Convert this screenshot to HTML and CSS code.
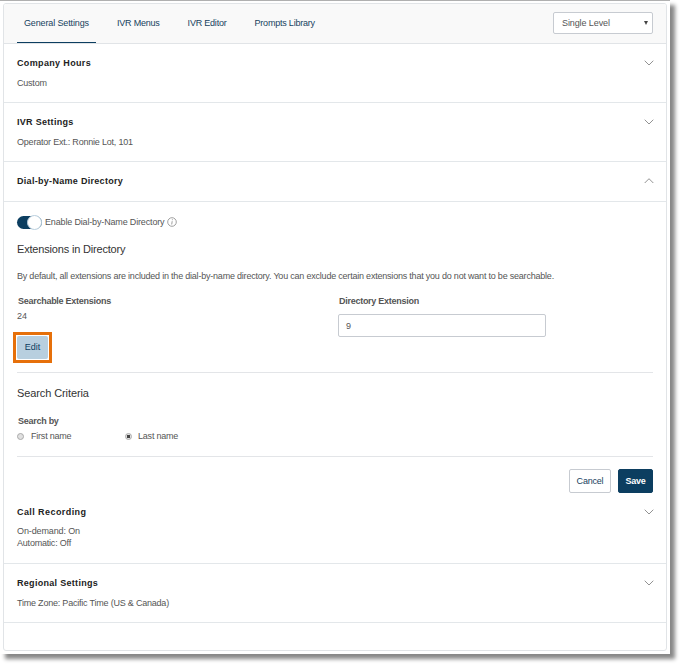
FILE: index.html
```html
<!DOCTYPE html>
<html lang="en">
<head>
<meta charset="utf-8">
<title>General Settings</title>
<link rel="stylesheet" href="styles.css">
</head>
<body>
<div class="sheet">
  <main class="panel">
    <header class="topbar">
      <nav class="tabs">
        <a class="tab active"><span class="t-general">General Settings</span></a>
        <a class="tab"><span class="t-menus">IVR Menus</span></a>
        <a class="tab"><span class="t-editor">IVR Editor</span></a>
        <a class="tab"><span class="t-prompts">Prompts Library</span></a>
      </nav>
      <div class="select"><span>Single Level</span><i class="caret"></i></div>
    </header>

    <section class="row">
      <div><h2 class="h-company">Company Hours</h2><p>Custom</p></div>
      <svg class="chev" viewBox="0 0 10 6"><path d="M.7.7 5 5 9.300.7"/></svg>
    </section>
    <section class="row">
      <div><h2 class="h-ivr">IVR Settings</h2><p class="p-operator">Operator Ext.: Ronnie Lot, 101</p></div>
      <svg class="chev" viewBox="0 0 10 6"><path d="M.7.7 5 5 9.300.7"/></svg>
    </section>
    <section class="row head">
      <div><h2 class="h-dial">Dial-by-Name Directory</h2></div>
      <svg class="chev" viewBox="0 0 10 6"><path d="M.7 5 5 .7 9.300 5"/></svg>
    </section>

    <section class="body">
      <div class="enable">
        <span class="toggle"><i class="knob"></i></span>
        <span class="t-enable">Enable Dial-by-Name Directory</span>
        <svg class="info" viewBox="0 0 10 10"><circle cx="5" cy="5" r="4.300"/><path d="M5.400 2.300v.9M5.200 4.200 4.700 7.500"/></svg>
      </div>
      <h3 class="h-ext">Extensions in Directory</h3>
      <p class="note">By default, all extensions are included in the dial-by-name directory. You can exclude certain extensions that you do not want to be searchable.</p>
      <div class="cols">
        <div class="col">
          <label class="l-search">Searchable Extensions</label>
          <p class="count">24</p>
          <div class="callout"><button class="edit">Edit</button></div>
        </div>
        <div class="col">
          <label class="l-dir">Directory Extension</label>
          <div class="field">9</div>
        </div>
      </div>
      <div class="criteria">
        <h3 class="h-crit">Search Criteria</h3>
        <label class="l-by">Search by</label>
        <div class="radios">
          <span class="radio"><i class="dot"></i><span class="t-first">First name</span></span>
          <span class="radio"><i class="dot on"></i><span class="t-last">Last name</span></span>
        </div>
      </div>
      <div class="actions">
        <button class="cancel">Cancel</button>
        <button class="save">Save</button>
      </div>
    </section>

    <section class="row recording">
      <div><h2 class="h-call">Call Recording</h2><p><span class="p-demand">On-demand: On</span><br><span class="p-auto">Automatic: Off</span></p></div>
      <svg class="chev" viewBox="0 0 10 6"><path d="M.7.7 5 5 9.300.7"/></svg>
    </section>
    <section class="row">
      <div><h2 class="h-reg">Regional Settings</h2><p class="p-zone">Time Zone: Pacific Time (US &amp; Canada)</p></div>
      <svg class="chev" viewBox="0 0 10 6"><path d="M.7.7 5 5 9.300.7"/></svg>
    </section>
  </main>
</div>
</body>
</html>
```
FILE: styles.css
```css
* { box-sizing: border-box; }
body {
  margin: 0;
  height: 666px;
  background: #fff;
  font: 9px/12px "Liberation Sans", Arial, sans-serif;
  letter-spacing: -.21px;
  color: #555;
  overflow: hidden;
}
h2, h3, p { margin: 0; white-space: nowrap; }
button, label { font: inherit; letter-spacing: inherit; }
.sheet {
  width: 670px;
  height: 654px;
  padding: 3px;
  background: #fff;
  border-top: 1px solid #b0b0b0;
  box-shadow: 5px 5px 4px #888;
}
.panel {
  width: 664px;
  height: 648px;
  margin-top: -1px;
  border: 1px solid #e1e4e7;
  border-radius: 3px;
  overflow: hidden;
}
.topbar {
  display: flex;
  justify-content: space-between;
  height: 40px;
  padding: 0 13px;
  background: #f9f9f9;
  border-bottom: 1px solid #e1e4e7;
}
.tabs { display: flex; }
.tab {
  height: 39px;
  margin-right: 14px;
  padding: 13px 7px 0;
  color: #17425e;
  white-space: nowrap;
}
.t-general { letter-spacing: -.13px; }
.tab.active { border-bottom: 1px solid #0c3e60; }
.select {
  display: flex;
  justify-content: space-between;
  width: 100px;
  height: 22px;
  margin-top: 8px;
  padding: 4px 4px 0 8px;
  background: #fff;
  border: 1px solid #c7cbd1;
  border-radius: 2px;
  letter-spacing: -.1px;
}
.caret {
  width: 4px;
  height: 4px;
  margin-top: 4px;
  background: #444;
  clip-path: polygon(0 0, 100% 0, 50% 100%);
}
.row {
  display: flex;
  justify-content: space-between;
  height: 59px;
  padding: 13px 12px 0 13px;
  border-bottom: 1px solid #e3e7ea;
}
.row h2 {
  font-size: 9px;
  line-height: 12px;
  font-weight: bold;
  color: #222;
  letter-spacing: .3px;
}
.row .h-company { letter-spacing: .35px; }
.row .h-call { letter-spacing: .42px; }
.row p { margin-top: 8px; }
.p-demand { letter-spacing: -.12px; }
.chev {
  width: 10px;
  height: 6px;
  margin-top: 3px;
  fill: none;
  stroke: #929292;
  stroke-width: 1;
}
.row.head { height: 40px; }
.body { padding: 13px 13px 0; height: 291px; }
.enable { display: flex; align-items: center; height: 14px; white-space: nowrap; }
.t-enable { letter-spacing: -.16px; }
.toggle {
  display: flex;
  justify-content: flex-end;
  align-items: center;
  width: 25px;
  height: 13px;
  margin-right: 3px;
  background: #0c3e60;
  border-radius: 7px;
}
.knob {
  flex: none;
  width: 15px;
  height: 15px;
  background: #fff;
  border: 1px solid #b9cfde;
  border-radius: 50%;
}
.info { width: 10px; height: 10px; margin-left: 3px; fill: none; stroke: #888; stroke-width: .8; }
h3 { font-size: 11px; line-height: 14px; font-weight: normal; color: #333; letter-spacing: -.18px; }
.h-crit { letter-spacing: -.1px; }
.h-ext { margin-top: 13px; }
.note { margin-top: 14px; }
.cols { display: flex; height: 78px; margin-top: 13px; border-bottom: 1px solid #e3e5e8; }
.col { flex: none; width: 321px; }
.col label, .criteria label {
  display: block;
  padding-left: 1px;
  font-weight: bold;
  letter-spacing: -.27px;
  white-space: nowrap;
}
.count { margin-top: 3px; letter-spacing: 0; }
.callout {
  width: 39px;
  height: 31px;
  margin: 10px 0 0 -4px;
  padding: 1px;
  border: 3px solid #e6700a;
}
.edit {
  display: block;
  width: 31px;
  height: 23px;
  padding: 0 0 2px;
  background: #b8cfdf;
  border: 0;
  border-radius: 2px;
  color: #0c3e60;
  letter-spacing: 0;
}
.field {
  width: 208px;
  height: 23px;
  margin-top: 7px;
  padding: 5px 7px;
  border: 1px solid #c7cbd1;
  border-radius: 2px;
}
.criteria { height: 84px; padding-top: 13px; border-bottom: 1px solid #e3e5e8; }
.criteria label { margin-top: 15px; }
.radios { display: flex; margin-top: 3px; }
.radio { display: flex; align-items: center; width: 108px; white-space: nowrap; }
.dot {
  width: 7px;
  height: 7px;
  margin-right: 7px;
  background: #e0e0e0;
  border: 1px solid #aaa;
  border-radius: 50%;
}
.dot.on { margin-right: 6px; background: radial-gradient(circle, #444 0 1.5px, #e3e3e3 2px); }
.actions { display: flex; justify-content: flex-end; gap: 7px; margin-top: 12px; }
.actions button { height: 24px; padding: 0 0 1px; border-radius: 2px; }
.cancel { width: 42px; background: #fff; border: 1px solid #c7cbd1; color: #17425e; }
.save { width: 35px; background: #0c3e60; border: 1px solid #0c3e60; color: #fff; }
.actions .save { font-weight: bold; }
.row.recording { height: 71px; }
.recording p { margin-top: 7px; }
```
